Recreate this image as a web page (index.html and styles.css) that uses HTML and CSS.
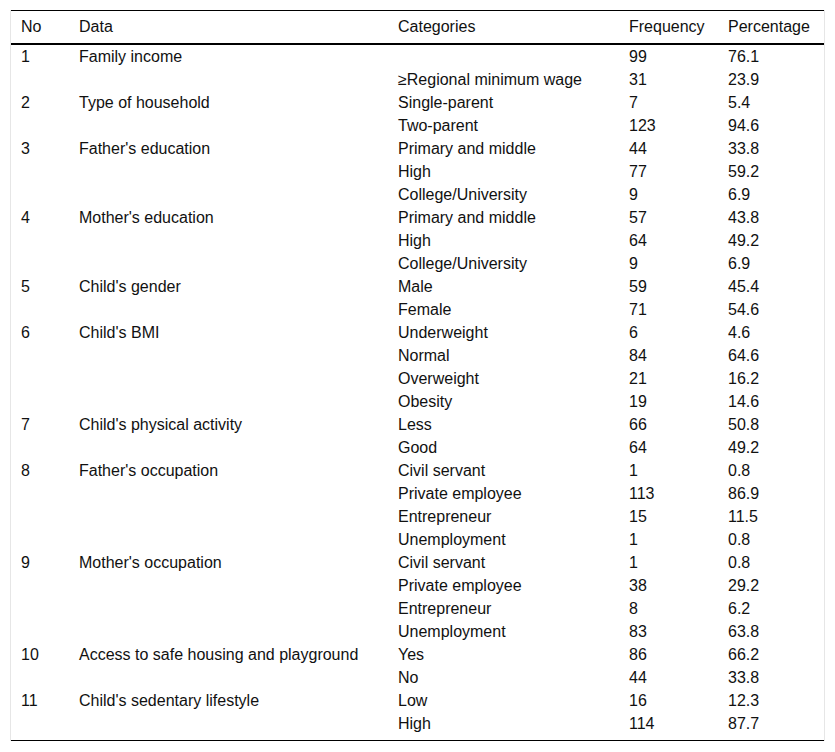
FILE: index.html
```html
<!DOCTYPE html>
<html lang="en">
<head>
<meta charset="utf-8">
<title>Table</title>
<link rel="stylesheet" href="styles.css">
</head>
<body>
<div class="wrap">
<table class="data">
<colgroup>
<col class="c-no"><col class="c-data"><col class="c-cat"><col class="c-freq"><col class="c-pct">
</colgroup>
<thead>
<tr><th>No</th><th>Data</th><th>Categories</th><th>Frequency</th><th>Percentage</th></tr>
</thead>
<tbody>
<tr><td>1</td><td>Family income</td><td></td><td>99</td><td>76.1</td></tr>
<tr><td></td><td></td><td>≥Regional minimum wage</td><td>31</td><td>23.9</td></tr>
<tr><td>2</td><td>Type of household</td><td>Single-parent</td><td>7</td><td>5.4</td></tr>
<tr><td></td><td></td><td>Two-parent</td><td>123</td><td>94.6</td></tr>
<tr><td>3</td><td>Father's education</td><td>Primary and middle</td><td>44</td><td>33.8</td></tr>
<tr><td></td><td></td><td>High</td><td>77</td><td>59.2</td></tr>
<tr><td></td><td></td><td>College/University</td><td>9</td><td>6.9</td></tr>
<tr><td>4</td><td>Mother's education</td><td>Primary and middle</td><td>57</td><td>43.8</td></tr>
<tr><td></td><td></td><td>High</td><td>64</td><td>49.2</td></tr>
<tr><td></td><td></td><td>College/University</td><td>9</td><td>6.9</td></tr>
<tr><td>5</td><td>Child's gender</td><td>Male</td><td>59</td><td>45.4</td></tr>
<tr><td></td><td></td><td>Female</td><td>71</td><td>54.6</td></tr>
<tr><td>6</td><td>Child's BMI</td><td>Underweight</td><td>6</td><td>4.6</td></tr>
<tr><td></td><td></td><td>Normal</td><td>84</td><td>64.6</td></tr>
<tr><td></td><td></td><td>Overweight</td><td>21</td><td>16.2</td></tr>
<tr><td></td><td></td><td>Obesity</td><td>19</td><td>14.6</td></tr>
<tr><td>7</td><td>Child's physical activity</td><td>Less</td><td>66</td><td>50.8</td></tr>
<tr><td></td><td></td><td>Good</td><td>64</td><td>49.2</td></tr>
<tr><td>8</td><td>Father's occupation</td><td>Civil servant</td><td>1</td><td>0.8</td></tr>
<tr><td></td><td></td><td>Private employee</td><td>113</td><td>86.9</td></tr>
<tr><td></td><td></td><td>Entrepreneur</td><td>15</td><td>11.5</td></tr>
<tr><td></td><td></td><td>Unemployment</td><td>1</td><td>0.8</td></tr>
<tr><td>9</td><td>Mother's occupation</td><td>Civil servant</td><td>1</td><td>0.8</td></tr>
<tr><td></td><td></td><td>Private employee</td><td>38</td><td>29.2</td></tr>
<tr><td></td><td></td><td>Entrepreneur</td><td>8</td><td>6.2</td></tr>
<tr><td></td><td></td><td>Unemployment</td><td>83</td><td>63.8</td></tr>
<tr><td>10</td><td>Access to safe housing and playground</td><td>Yes</td><td>86</td><td>66.2</td></tr>
<tr><td></td><td></td><td>No</td><td>44</td><td>33.8</td></tr>
<tr><td>11</td><td>Child's sedentary lifestyle</td><td>Low</td><td>16</td><td>12.3</td></tr>
<tr><td></td><td></td><td>High</td><td>114</td><td>87.7</td></tr>
</tbody>
</table>
</div>
</body>
</html>
```
FILE: styles.css
```css
html, body {
  margin: 0;
  padding: 0;
  background: #ffffff;
}
body {
  font-family: "Liberation Sans", Arial, sans-serif;
  font-size: 16px;
  color: #111111;
}
.wrap {
  margin: 10px 0 0 10px;
  width: 813px;
  border-left: 1px solid #e6e6e6;
  border-right: 1px solid #e6e6e6;
}
.data {
  width: 813px;
  table-layout: fixed;
  border-collapse: collapse;
  border-top: 1px solid #000000;
  border-bottom: 1px solid #000000;
}
.c-no { width: 58px; }
.c-data { width: 319px; }
.c-cat { width: 231px; }
.c-freq { width: 99px; }
.c-pct { width: 106px; }
.data th {
  text-align: left;
  font-weight: normal;
  padding: 6px 10px;
  line-height: 20px;
  border-bottom: 2px solid #000000;
  white-space: nowrap;
}
.data td {
  padding: 2px 10px;
  line-height: 19px;
  vertical-align: top;
  white-space: nowrap;
}
.data tbody tr:last-child td {
  padding-bottom: 7px;
}
```
